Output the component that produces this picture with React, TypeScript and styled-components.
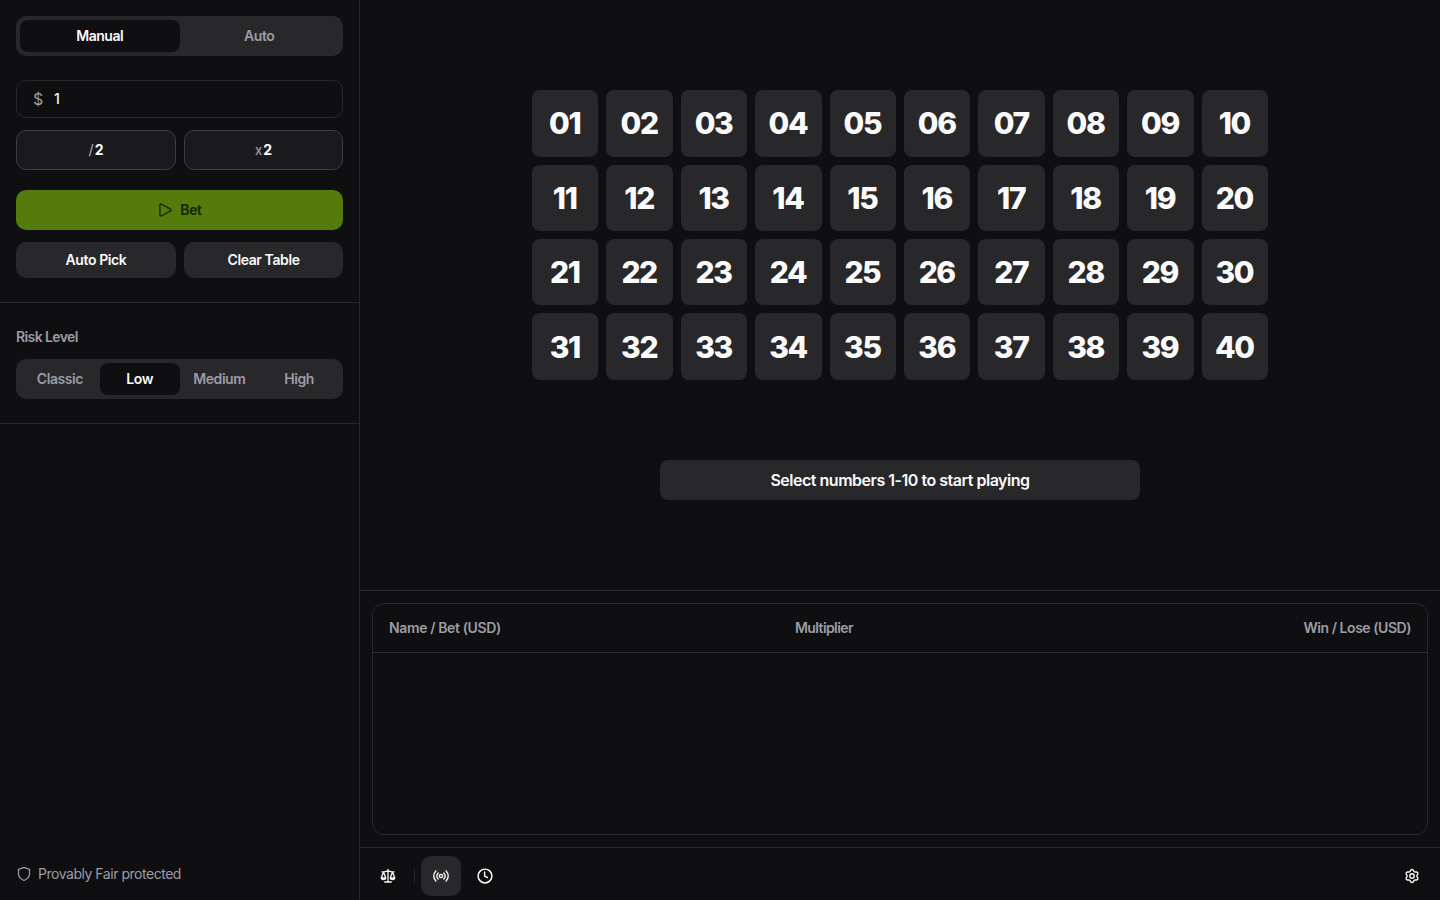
import React, { useState } from "react";
import styled, { createGlobalStyle } from "styled-components";

const GlobalStyle = createGlobalStyle`
  *, *::before, *::after { box-sizing: border-box; }
  body {
    margin: 0;
    background: #0f0f11;
    color: #fafafa;
    font-family: Inter, "Liberation Sans", sans-serif;
    font-size: 14px;
    line-height: 20px;
  }
  button, input { font: inherit; color: inherit; letter-spacing: inherit; }
  button { padding: 0; border: 0; background: none; cursor: pointer; }
`;

const Shell = styled.div`
  display: grid;
  grid-template-columns: 360px 1fr;
  height: 900px;
  background: #0f0f11;
`;
const Sidebar = styled.aside`
  display: flex;
  flex-direction: column;
  border-right: 1px solid #28282b;
`;
const Section = styled.section<{ $top: number }>`
  display: flex;
  flex-direction: column;
  padding: ${(p) => p.$top}px 16px 24px;
  border-bottom: 1px solid #28282b;
`;
const Segmented = styled.div<{ $after?: number }>`
  display: flex;
  height: 40px;
  padding: 4px;
  margin-bottom: ${(p) => p.$after ?? 0}px;
  border-radius: 10px;
  background: #28282b;
`;
const Segment = styled.button<{ $active: boolean }>`
  flex: 1 1 0;
  min-width: 0;
  border-radius: 8px;
  font-weight: 600;
  color: ${(p) => (p.$active ? "#fafafa" : "#9c9ca5")};
  background: ${(p) => (p.$active ? "#0f0f11" : "transparent")};
`;
const AmountField = styled.label`
  display: flex;
  align-items: center;
  height: 38px;
  padding: 0 16px;
  border: 1px solid #28282b;
  border-radius: 10px;
`;
const Currency = styled.span`
  width: 21px;
  font-size: 16px;
  color: #9c9ca5;
`;
const AmountInput = styled.input`
  flex: 1;
  min-width: 0;
  padding: 0;
  border: 0;
  outline: 0;
  background: transparent;
  font-weight: 500;
`;
const ButtonRow = styled.div`
  display: grid;
  grid-template-columns: 160px 1fr;
  gap: 8px;
  margin-top: 12px;
`;
const StepButton = styled.button`
  height: 40px;
  border: 1px solid #3e3e44;
  border-radius: 10px;
  background: #1a1a1d;
  font-weight: 700;
`;
const Operator = styled.span<{ $small?: boolean }>`
  margin-right: 1px;
  font-size: ${(p) => (p.$small ? 13 : 14)}px;
  line-height: 1;
  font-weight: 500;
  color: #9c9ca5;
`;
const BetButton = styled.button`
  display: flex;
  align-items: center;
  justify-content: center;
  gap: 7px;
  height: 40px;
  margin-top: 20px;
  border-radius: 10px;
  background: #567b0d;
  color: #122505;
  font-weight: 600;
`;
const ActionButton = styled.button`
  height: 36px;
  border-radius: 10px;
  background: #28282b;
  font-weight: 600;
`;
const Label = styled.div`
  margin-bottom: 12px;
  color: #9c9ca5;
  font-weight: 600;
`;
const Fairness = styled.footer`
  display: flex;
  align-items: center;
  gap: 6px;
  margin-top: auto;
  padding: 0 16px 16px;
  color: #9c9ca5;
`;
const Main = styled.main`
  display: flex;
  flex-direction: column;
  min-width: 0;
`;
const Game = styled.section`
  display: flex;
  flex-direction: column;
  align-items: center;
  justify-content: center;
  height: 591px;
  border-bottom: 1px solid #28282b;
`;
const Board = styled.div`
  display: grid;
  grid-template-columns: repeat(10, 1fr);
  gap: 8px;
  width: 736px;
`;
const Tile = styled.button`
  aspect-ratio: 1;
  padding-right: 1px;
  border-radius: 8px;
  background: #28282b;
  font-size: 30px;
  font-weight: 800;
  letter-spacing: -1.4px;
`;
const Prompt = styled.div`
  display: flex;
  align-items: center;
  justify-content: center;
  width: 480px;
  height: 40px;
  margin-top: 80px;
  border-radius: 8px;
  background: #28282b;
  font-size: 16px;
  font-weight: 600;
`;
const History = styled.section`
  height: 232px;
  margin: 12px;
  border: 1px solid #28282b;
  border-radius: 12px;
`;
const HistoryHeader = styled.div`
  display: grid;
  grid-template-columns: 406px 1fr auto;
  align-items: center;
  height: 49px;
  padding: 0 16px;
  border-bottom: 1px solid #28282b;
  color: #9c9ca5;
  font-weight: 600;
`;
const Toolbar = styled.nav`
  display: flex;
  align-items: center;
  height: 49px;
  padding: 8px 8px 0;
  border-top: 1px solid #28282b;
`;
const ToolButton = styled.button<{ $active?: boolean }>`
  display: grid;
  place-items: center;
  width: 40px;
  height: 40px;
  margin-right: ${(p) => (p.$active ? 4 : 0)}px;
  border-radius: 10px;
  background: ${(p) => (p.$active ? "#28282b" : "transparent")};
`;
const Separator = styled.span`
  width: 1px;
  height: 16px;
  margin: 0 6px;
  background: #28282b;
`;
const Spacer = styled.span`
  flex: 1;
`;
const Fit = styled.span<{ $spacing: number }>`
  letter-spacing: ${(p) => p.$spacing}px;
`;

type IconProps = { size?: number; stroke?: number; children: React.ReactNode };
const Icon = ({ size = 16, stroke = 1.3, children }: IconProps) => (
  <svg width={size} height={size} viewBox="0 0 16 16" fill="none" stroke="currentColor"
    strokeWidth={stroke} strokeLinecap="round" strokeLinejoin="round" aria-hidden="true">
    {children}
  </svg>
);
const PlayIcon = () => (
  <Icon><path d="M2.9 3.1v9.8c0 .9.8 1.3 1.6.9l8.7-4.7c1-.5 1-1.7 0-2.2L4.5 2.2c-.8-.4-1.6 0-1.6.9Z" /></Icon>
);
const ShieldIcon = () => (
  <Icon stroke={1.25}><path d="M8 1.4 13.5 3.3v4.8c0 2.9-2.2 5-5.5 6.4-3.3-1.4-5.5-3.5-5.5-6.4V3.3L8 1.4Z" /></Icon>
);
const ScaleIcon = () => (
  <Icon stroke={1.3}>
    <path d="M8 1.5v12.2M4.7 14h6.6M2 3.8h2.2C5.6 3.8 6.6 3 8 3s2.4.8 3.8.8H14M3.5 4 1.2 10M3.5 4l2.3 6M12.5 4l-2.3 6M12.5 4l2.3 6M1.2 10h4.6c-.2 1.1-1 1.7-2.3 1.7S1.4 11.1 1.2 10ZM10.2 10h4.6c-.2 1.1-1 1.7-2.3 1.7s-2.1-.6-2.3-1.7Z" />
  </Icon>
);
const LiveIcon = () => (
  <Icon stroke={1.4}>
    <circle cx="8" cy="8" r="1.6" />
    <path d="M5.2 4.9a4.2 4.2 0 0 0 0 6.2M10.8 4.9a4.2 4.2 0 0 1 0 6.2M2.9 3a7 7 0 0 0 0 10M13.1 3a7 7 0 0 1 0 10" />
  </Icon>
);
const ClockIcon = () => (
  <Icon stroke={1.45}><circle cx="8" cy="8" r="6.9" /><path d="M7.6 4v4.1l2.8 1.4" /></Icon>
);

// Six-toothed outline: the radius swells at every 60 degrees, starting at the top.
const gearOutline = Array.from({ length: 72 }, (_, i) => {
  const a = (i * Math.PI) / 36;
  const r = 5.7 + 0.85 * Math.cos(6 * a);
  return `${(8 + r * Math.sin(a)).toFixed(2)} ${(8 - r * Math.cos(a)).toFixed(2)}`;
}).join("L");
const GearIcon = () => (
  <Icon stroke={1.4}>
    <circle cx="8" cy="8" r="2.2" />
    <path d={`M${gearOutline}Z`} />
  </Icon>
);

const numbers = Array.from({ length: 40 }, (_, i) => String(i + 1).padStart(2, "0"));
const risks = ["Classic", "Low", "Medium", "High"];

export default function App() {
  const [mode, setMode] = useState("Manual");
  const [risk, setRisk] = useState("Low");
  const [amount, setAmount] = useState("1");
  return (
    <>
      <GlobalStyle />
      <Shell>
        <Sidebar>
          <Section $top={16}>
            <Segmented $after={24}>
              {["Manual", "Auto"].map((m) => (
                <Segment key={m} $active={m === mode} onClick={() => setMode(m)}><Fit $spacing={-0.45}>{m}</Fit></Segment>
              ))}
            </Segmented>
            <AmountField>
              <Currency>$</Currency>
              <AmountInput value={amount} onChange={(e) => setAmount(e.target.value)} />
            </AmountField>
            <ButtonRow>
              <StepButton><Operator>/</Operator>2</StepButton>
              <StepButton><Operator $small>x</Operator>2</StepButton>
            </ButtonRow>
            <BetButton><PlayIcon /><Fit $spacing={-0.35}>Bet</Fit></BetButton>
            <ButtonRow>
              <ActionButton><Fit $spacing={-0.4}>Auto Pick</Fit></ActionButton>
              <ActionButton><Fit $spacing={-0.4}>Clear Table</Fit></ActionButton>
            </ButtonRow>
          </Section>
          <Section $top={24}>
            <Label><Fit $spacing={-0.6}>Risk Level</Fit></Label>
            <Segmented>
              {risks.map((r) => (
                <Segment key={r} $active={r === risk} onClick={() => setRisk(r)}><Fit $spacing={-0.45}>{r}</Fit></Segment>
              ))}
            </Segmented>
          </Section>
          <Fairness><ShieldIcon /><Fit $spacing={-0.47}>Provably Fair protected</Fit></Fairness>
        </Sidebar>
        <Main>
          <Game>
            <Board>{numbers.map((n) => <Tile key={n}>{n}</Tile>)}</Board>
            <Prompt><Fit $spacing={-0.48}>Select numbers 1-10 to start playing</Fit></Prompt>
          </Game>
          <History>
            <HistoryHeader>
              <Fit $spacing={-0.38}>Name / Bet (USD)</Fit>
              <Fit $spacing={-0.6}>Multiplier</Fit>
              <Fit $spacing={-0.45}>Win / Lose (USD)</Fit>
            </HistoryHeader>
          </History>
          <Toolbar>
            <ToolButton aria-label="Fairness"><ScaleIcon /></ToolButton>
            <Separator />
            <ToolButton $active aria-label="Live bets"><LiveIcon /></ToolButton>
            <ToolButton aria-label="History"><ClockIcon /></ToolButton>
            <Spacer />
            <ToolButton aria-label="Settings"><GearIcon /></ToolButton>
          </Toolbar>
        </Main>
      </Shell>
    </>
  );
}
